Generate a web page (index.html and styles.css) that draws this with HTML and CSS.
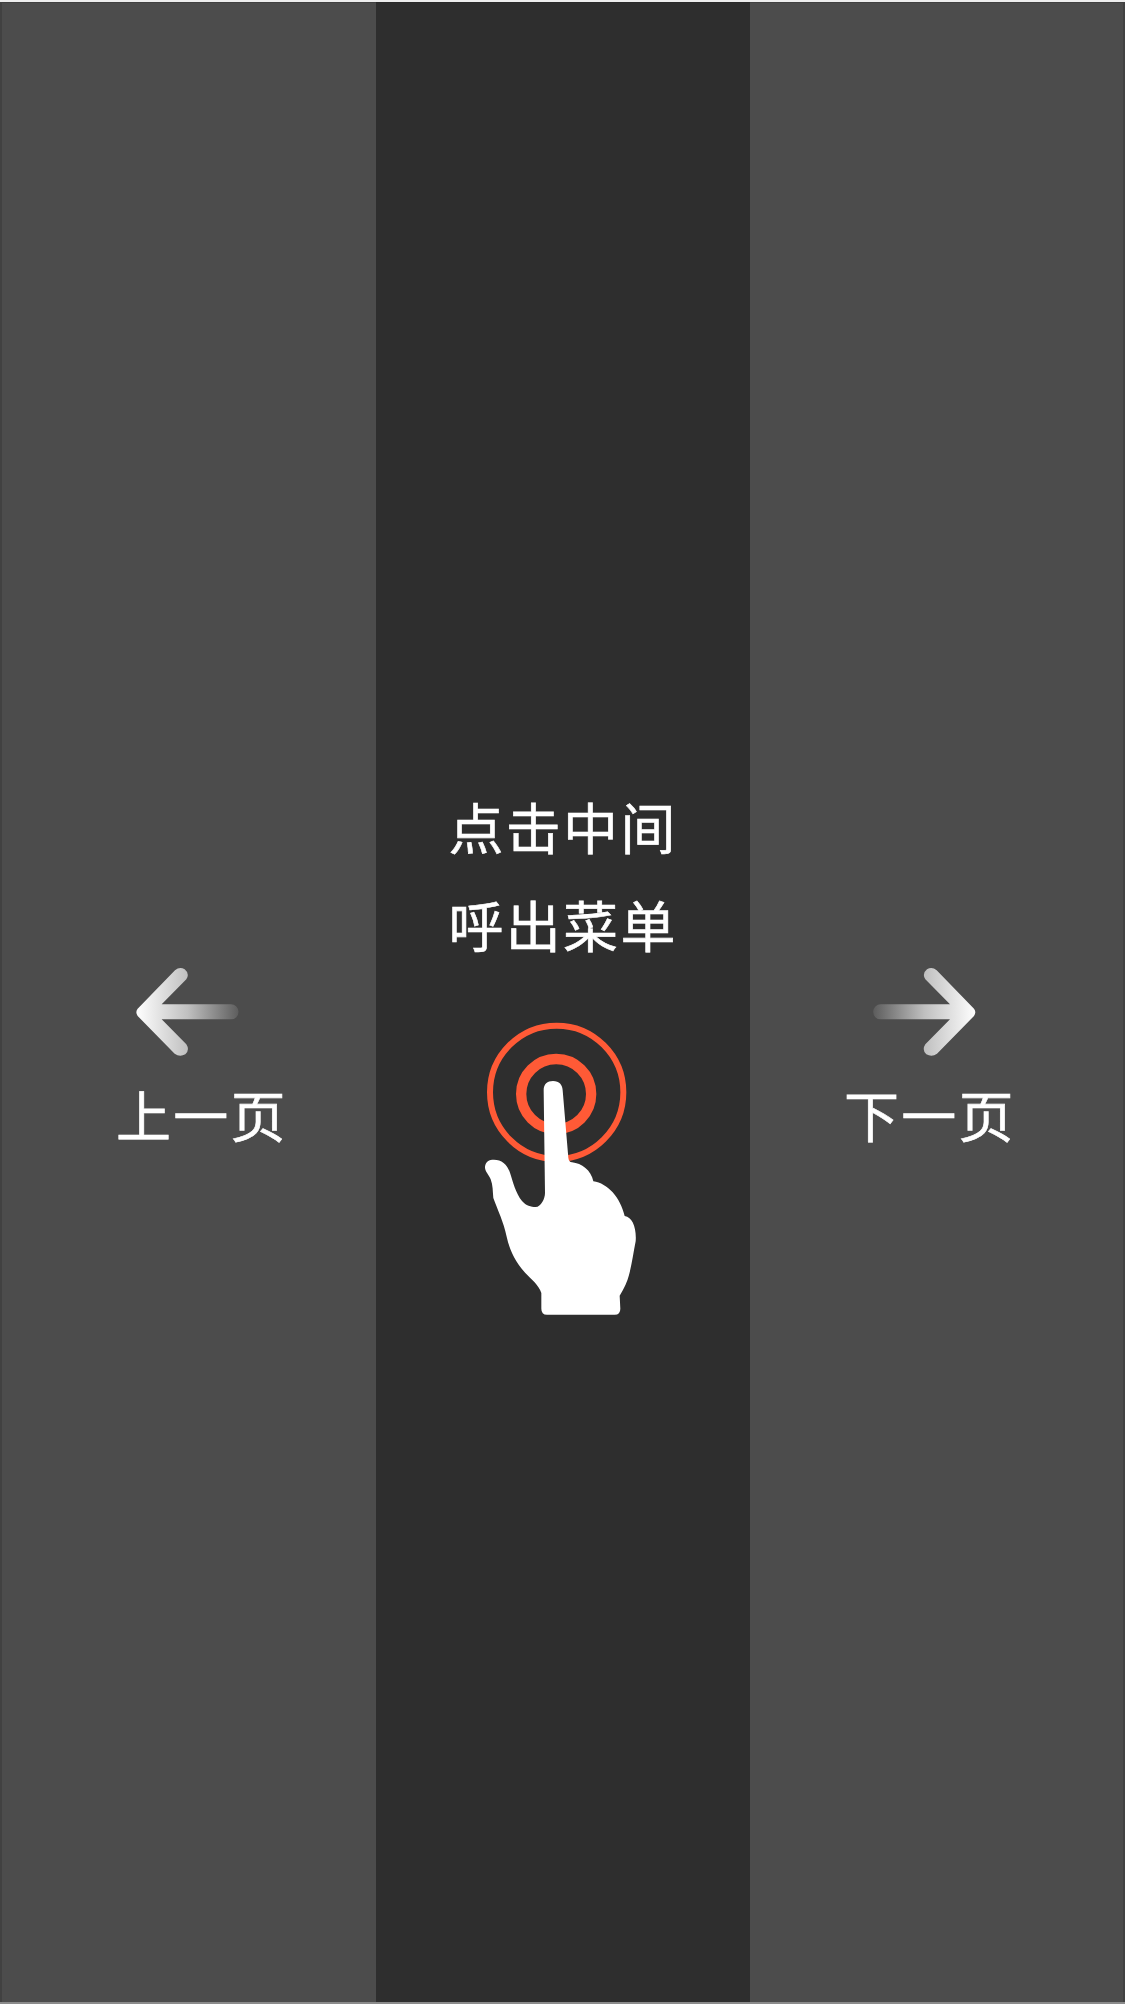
FILE: index.html
```
<!DOCTYPE html>
<html lang="zh-CN">
<head>
<meta charset="utf-8">
<title>阅读操作引导</title>
<link rel="stylesheet" href="styles.css">
</head>
<body>
<main class="guide">
  <section class="zone zone-prev">
    <svg class="arrow" viewBox="0 0 310 270" aria-hidden="true">
      <defs>
        <linearGradient id="fade-prev" gradientUnits="userSpaceOnUse" x1="0" y1="0" x2="310" y2="0">
          <stop offset="0" stop-color="#fff"/>
          <stop offset=".5" stop-color="#c0c0c0"/>
          <stop offset="1" stop-color="#5c5c5c"/>
        </linearGradient>
      </defs>
      <path fill="url(#fade-prev)" d="M5 125L117 10Q131-2 146 7Q162 20 151 37L77 112H285A22 22 0 0 1 285 157H77L151 232Q162 249 148 262Q131 271 116 260L5 147Q-3 136 5 125Z"/>
    </svg>
    <p class="label">上一页</p>
  </section>
  <section class="zone zone-menu">
    <p class="label">点击中间<br>呼出菜单</p>
    <svg class="tap" viewBox="0 0 540 960" aria-hidden="true">
      <circle cx="260" cy="247" r="200" fill="none" stroke="#ff5a36" stroke-width="18"/>
      <circle cx="258.500" cy="252" r="105" fill="none" stroke="#ff5a36" stroke-width="31"/>
      <path fill="#fff" d="M221 241C221 222 232 213 249 213C268 213 277 224 278 241L295 443Q296 455 306 457C335 460 363 480 370 514C413 520 451 562 464 618C488 622 500 654 497 694C490 728 486 762 477 795Q470 823 449 857L451 896Q451 914 434 914H231Q214 914 214 896V849C206 824 186 811 166 789C133 752 118 716 110 680C101 636 83 600 70 564C68 544 69 526 62 508C56 492 44 484 45 470C47 454 57 449 72 449C94 449 111 462 120 488C129 516 137 549 156 573C168 587 183 591 197 591C213 591 225 566 225 549Z"/>
    </svg>
  </section>
  <section class="zone zone-next">
    <svg class="arrow" viewBox="0 0 310 270" aria-hidden="true">
      <defs>
        <linearGradient id="fade-next" gradientUnits="userSpaceOnUse" x1="0" y1="0" x2="310" y2="0">
          <stop offset="0" stop-color="#5c5c5c"/>
          <stop offset=".5" stop-color="#c0c0c0"/>
          <stop offset="1" stop-color="#fff"/>
        </linearGradient>
      </defs>
      <path fill="url(#fade-next)" d="M303 125L191 10Q177-2 162 7Q146 20 157 37L231 112H23A22 22 0 0 0 23 157H231L157 232Q146 249 160 262Q177 271 192 260L303 147Q311 136 303 125Z"/>
    </svg>
    <p class="label">下一页</p>
  </section>
</main>
</body>
</html>
```
FILE: styles.css
```
* {
  box-sizing: border-box;
}

body {
  margin: 0;
  background: #4c4c4c;
}

.guide {
  display: grid;
  grid-template-columns: 376px 374px 375px;
  height: 2004px;
  border-top: 2px solid #eee;
  border-bottom: 2px solid #8b8b8b;
  color: #fff;
  font-family: "Noto Sans CJK SC", sans-serif;
}

.zone {
  display: flex;
  flex-direction: column;
  background: #4c4c4c;
  border-top: 1px solid #414141;
}

.zone-prev {
  padding: 963.500px 0 0 117px;
  border-left: 2px solid #414141;
}

.zone-menu {
  padding: 773px 0 0 72.500px;
  background: #2e2e2e;
  border-top-color: #2a2a2a;
}

.zone-next {
  padding: 963.500px 0 0 94px;
  border-right: 2px solid #414141;
}

.label {
  margin: 0;
  font-size: 55px;
  letter-spacing: 2.300px;
  line-height: 98px;
  white-space: nowrap;
  -webkit-text-stroke: .6px #fff;
}

.arrow {
  display: block;
  width: 103.330px;
  height: 90px;
  margin: 0 0 7.500px 17px;
}

.zone-prev .label {
  margin-left: -3px;
}

.zone-next .arrow {
  margin-left: 28.500px;
}

.tap {
  display: block;
  width: 180px;
  height: 320px;
  margin: 38px 0 0 21.500px;
}
```
